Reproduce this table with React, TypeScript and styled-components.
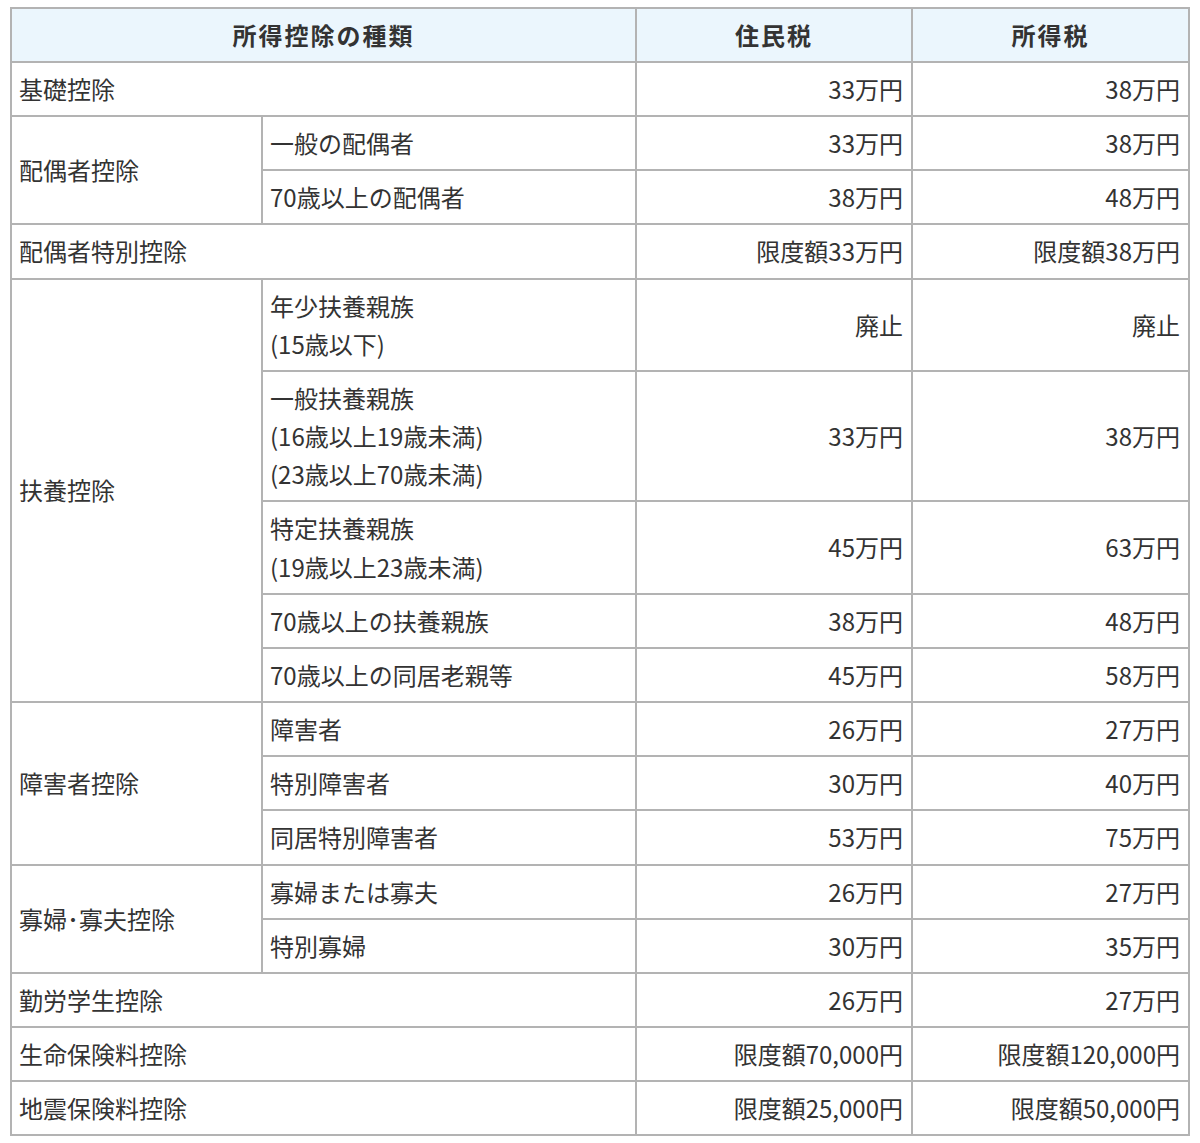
import React from 'react';
import styled, { createGlobalStyle } from 'styled-components';

const GlobalStyle = createGlobalStyle`
  body {
    margin: 0;
    background: #ffffff;
    font-family: "Noto Sans CJK JP", "Noto Sans", sans-serif;
    color: #333333;
  }
`;

const Wrapper = styled.div`
  padding: 7px 0 0 10px;
`;

const Table = styled.table`
  width: 1178px;
  border-collapse: collapse;
  table-layout: fixed;
  border: 2px solid #b3b3b3;
  font-size: 24px;
  line-height: 38.15px;
`;

const HeadCell = styled.th`
  background: #ebf6fd;
  border: 2px solid #b3b3b3;
  height: 52px;
  padding: 0 8px;
  font-size: 24px;
  font-weight: bold;
  letter-spacing: 2px;
  text-align: center;
  color: #333333;
`;

const Cell = styled.td<{ $right?: boolean }>`
  border: 2px solid #b3b3b3;
  padding: 7px 8px 7px 7px;
  text-align: ${({ $right }) => ($right ? 'right' : 'left')};
  vertical-align: middle;
  white-space: nowrap;
`;

interface SubRow {
  label: string[];
  resident: string;
  income: string;
}

interface Group {
  name: string;
  rows?: SubRow[];
  resident?: string;
  income?: string;
}

const data: Group[] = [
  { name: '基礎控除', resident: '33万円', income: '38万円' },
  {
    name: '配偶者控除',
    rows: [
      { label: ['一般の配偶者'], resident: '33万円', income: '38万円' },
      { label: ['70歳以上の配偶者'], resident: '38万円', income: '48万円' },
    ],
  },
  { name: '配偶者特別控除', resident: '限度額33万円', income: '限度額38万円' },
  {
    name: '扶養控除',
    rows: [
      { label: ['年少扶養親族', '(15歳以下)'], resident: '廃止', income: '廃止' },
      {
        label: ['一般扶養親族', '(16歳以上19歳未満)', '(23歳以上70歳未満)'],
        resident: '33万円',
        income: '38万円',
      },
      { label: ['特定扶養親族', '(19歳以上23歳未満)'], resident: '45万円', income: '63万円' },
      { label: ['70歳以上の扶養親族'], resident: '38万円', income: '48万円' },
      { label: ['70歳以上の同居老親等'], resident: '45万円', income: '58万円' },
    ],
  },
  {
    name: '障害者控除',
    rows: [
      { label: ['障害者'], resident: '26万円', income: '27万円' },
      { label: ['特別障害者'], resident: '30万円', income: '40万円' },
      { label: ['同居特別障害者'], resident: '53万円', income: '75万円' },
    ],
  },
  {
    name: '寡婦･寡夫控除',
    rows: [
      { label: ['寡婦または寡夫'], resident: '26万円', income: '27万円' },
      { label: ['特別寡婦'], resident: '30万円', income: '35万円' },
    ],
  },
  { name: '勤労学生控除', resident: '26万円', income: '27万円' },
  { name: '生命保険料控除', resident: '限度額70,000円', income: '限度額120,000円' },
  { name: '地震保険料控除', resident: '限度額25,000円', income: '限度額50,000円' },
];

const Label: React.FC<{ lines: string[] }> = ({ lines }) => (
  <>
    {lines.map((line, i) => (
      <React.Fragment key={i}>
        {i > 0 && <br />}
        {line}
      </React.Fragment>
    ))}
  </>
);

const App: React.FC = () => {
  return (
    <Wrapper>
      <GlobalStyle />
      <Table>
        <colgroup>
          <col style={{ width: 251 }} />
          <col style={{ width: 374 }} />
          <col style={{ width: 276 }} />
          <col style={{ width: 277 }} />
        </colgroup>
        <thead>
          <tr>
            <HeadCell colSpan={2}>所得控除の種類</HeadCell>
            <HeadCell>住民税</HeadCell>
            <HeadCell>所得税</HeadCell>
          </tr>
        </thead>
        <tbody>
          {data.map((group) =>
            group.rows ? (
              group.rows.map((row, i) => (
                <tr key={`${group.name}-${i}`}>
                  {i === 0 && <Cell rowSpan={group.rows!.length}>{group.name}</Cell>}
                  <Cell>
                    <Label lines={row.label} />
                  </Cell>
                  <Cell $right>{row.resident}</Cell>
                  <Cell $right>{row.income}</Cell>
                </tr>
              ))
            ) : (
              <tr key={group.name}>
                <Cell colSpan={2}>{group.name}</Cell>
                <Cell $right>{group.resident}</Cell>
                <Cell $right>{group.income}</Cell>
              </tr>
            )
          )}
        </tbody>
      </Table>
    </Wrapper>
  );
};

export default App;
